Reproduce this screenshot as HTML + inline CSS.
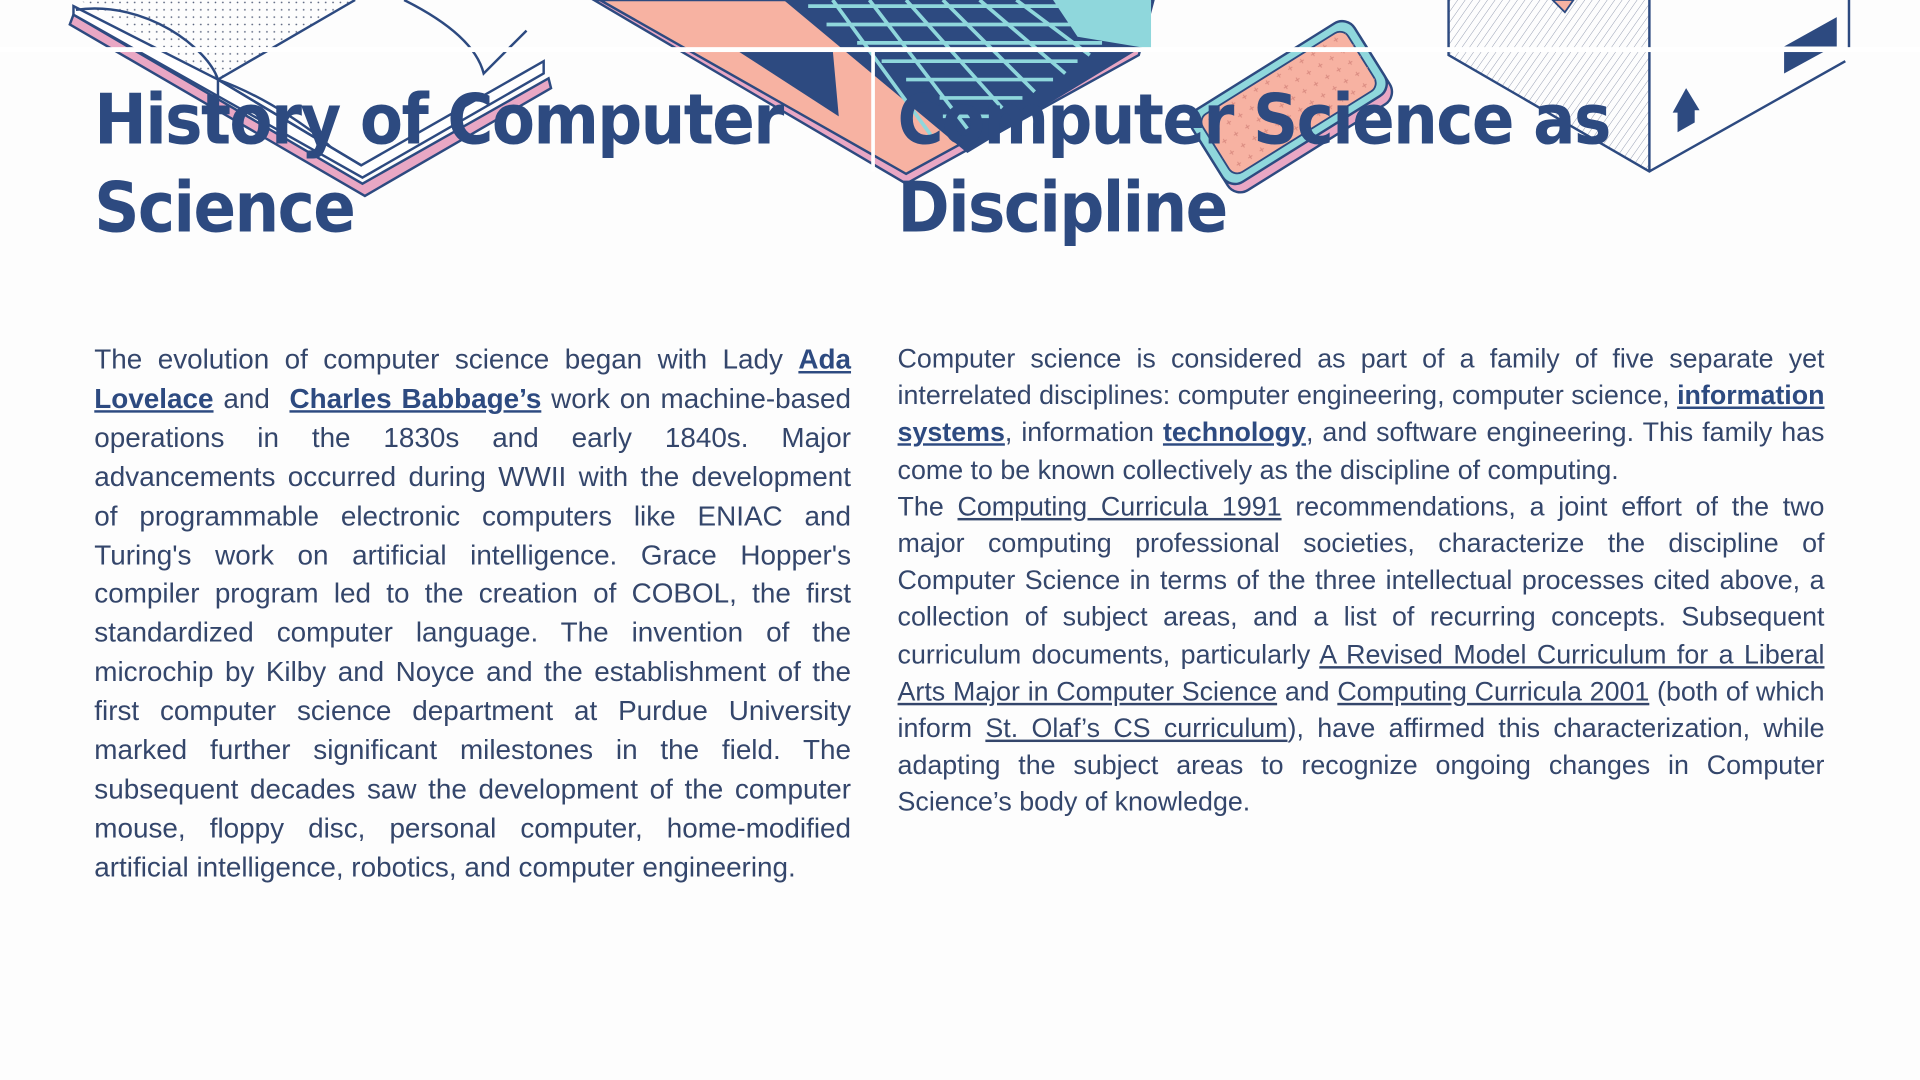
<!DOCTYPE html>
<html><head><meta charset="utf-8"><style>
html,body{margin:0;padding:0;background:#fdfdfd;width:1920px;height:1080px;overflow:hidden}
#w{position:absolute;left:0;top:0;width:1568px;height:882px;transform:scale(1.22449);transform-origin:0 0}
svg{position:absolute;left:0;top:0}
h1{position:absolute;margin:0;font-family:"DejaVu Sans Condensed","DejaVu Sans",sans-serif;font-weight:bold;font-size:57px;line-height:72px;color:#2d4a80;letter-spacing:-1.3px}
.t{position:absolute;font-family:"Liberation Sans",sans-serif;font-size:21.9px;color:#34466b;text-align:justify}
.t b{color:#2d4a80}
.t a{color:#34466b;text-decoration:underline}
.t b a, a b{color:#2d4a80}
</style></head><body><div id="w">
<svg width="1568" height="882" viewBox="0 0 1568 882">
<defs>
<pattern id="dots" width="6" height="6" patternUnits="userSpaceOnUse"><circle cx="2" cy="2" r="0.7" fill="#55607a"/></pattern>
<pattern id="hatch" width="5" height="5" patternUnits="userSpaceOnUse" patternTransform="rotate(35)"><line x1="0" y1="0" x2="0" y2="5" stroke="#8891a8" stroke-width="0.7"/></pattern>
<pattern id="plus" width="11" height="11" patternUnits="userSpaceOnUse"><path d="M5 3v4M3 5h4" stroke="#d98a80" stroke-width="0.8"/></pattern>
</defs>
<polygon points="57,20 298,160 450,72 448,64 296,150 60,12" fill="#e9a7c4" stroke="#2d4a80" stroke-width="2"/>
<polygon points="60,5 178,65 295,135 444,50 444,60 296,145 60,12" fill="#fff" stroke="#2d4a80" stroke-width="2"/>
<path d="M65 0 L178 65 L290 0 Z" fill="url(#dots)"/>
<path d="M62 8 C 120 0 170 40 178 65 L 178 115 M178 65 L295 135 M290 0 L178 65 M330 0 C 370 20 390 40 395 60 L 430 25" fill="none" stroke="#2d4a80" stroke-width="2"/>
<path d="M178 65 C 220 80 260 110 270 120" fill="none" stroke="#2d4a80" stroke-width="2"/>
<polygon points="485,0 740,150 930,45 942,0" fill="#e9a7c4" stroke="#2d4a80" stroke-width="2"/>
<polygon points="490,0 740,142 930,38 940,0" fill="#f7b2a2" stroke="#2d4a80" stroke-width="2"/>
<polygon points="600,40 680,40 685,95" fill="#2d4a80"/>
<polygon points="640,0 910,0 930,40 790,125" fill="#2d4a80"/>
<g stroke="#8fd7dc" stroke-width="3">
<path d="M660 5 L900 5 M675 20 L905 20 M700 35 L900 35 M720 50 L880 50 M740 65 L860 65 M755 80 L835 80 M770 95 L810 95"/>
<path d="M680 0 L760 110 M710 0 L790 105 M740 0 L820 90 M770 0 L845 75 M800 0 L870 60 M830 0 L890 45"/>
</g>
<polygon points="860,0 940,0 940,40 880,30" fill="#8fd7dc"/>
<g transform="translate(1055,88) rotate(-32)">
<rect x="-78" y="-32" width="156" height="70" rx="12" fill="#e9a7c4" stroke="#2d4a80" stroke-width="2"/>
<rect x="-78" y="-40" width="156" height="70" rx="12" fill="#8fd7dc" stroke="#2d4a80" stroke-width="2"/>
<rect x="-70" y="-33" width="140" height="56" rx="8" fill="#f7b2a2" stroke="#2d4a80" stroke-width="1.5"/>
<rect x="-70" y="-33" width="140" height="56" rx="8" fill="url(#plus)"/>
</g>
<polygon points="1183,0 1347,0 1347,140 1183,45" fill="url(#hatch)"/>
<path d="M1183 0 V45 L1347 140 L1507 50 M1347 0 V140 M1510 0 V40" fill="none" stroke="#2d4a80" stroke-width="2"/>
<polygon points="1457,38 1500,14 1500,38" fill="#2d4a80"/>
<polygon points="1457,42 1490,42 1457,60" fill="#2d4a80"/>
<polygon points="1377,72 1388,90 1384,90 1384,100 1370,108 1370,92 1366,92" fill="#2d4a80"/>
<polygon points="1268,0 1285,0 1278,10" fill="#f7b2a2" stroke="#2d4a80" stroke-width="1.5"/>
<rect x="0" y="38.5" width="1568" height="4" fill="#fff"/>
<rect x="711.5" y="40" width="3" height="100" fill="#fff"/>
</svg>
<h1 style="left:77px;top:62px;width:640px">History of Computer<br>Science</h1>
<h1 style="left:733px;top:62px;width:800px">Computer Science as<br>Discipline</h1>
<div class="t" style="left:77px;top:278px;width:618px;line-height:31.9px;font-size:22.75px">The evolution of computer science began with Lady <b><a>Ada Lovelace</a></b> and&nbsp; <b><a>Charles Babbage’s</a></b> work on machine-based operations in the 1830s and early 1840s. Major advancements occurred during WWII with the development of programmable electronic computers like ENIAC and Turing's work on artificial intelligence. Grace Hopper's compiler program led to the creation of COBOL, the first standardized computer language. The invention of the microchip by Kilby and Noyce and the establishment of the first computer science department at Purdue University marked further significant milestones in the field. The subsequent decades saw the development of the computer mouse, floppy disc, personal computer, home-modified artificial intelligence, robotics, and computer engineering.</div>
<div class="t" style="left:733px;top:278px;width:757px;line-height:30.2px">Computer science is considered as part of a family of five separate yet interrelated disciplines: computer engineering, computer science, <b><a>information systems</a></b>, information <b><a>technology</a></b>, and software engineering. This family has come to be known collectively as the discipline of computing.<br>The <a>Computing Curricula 1991</a> recommendations, a joint effort of the two major computing professional societies, characterize the discipline of Computer Science in terms of the three intellectual processes cited above, a collection of subject areas, and a list of recurring concepts. Subsequent curriculum documents, particularly <a>A Revised Model Curriculum for a Liberal Arts Major in Computer Science</a> and <a>Computing Curricula 2001</a> (both of which inform <a>St. Olaf’s CS curriculum</a>), have affirmed this characterization, while adapting the subject areas to recognize ongoing changes in Computer Science’s body of knowledge.</div>
</div></body></html>
